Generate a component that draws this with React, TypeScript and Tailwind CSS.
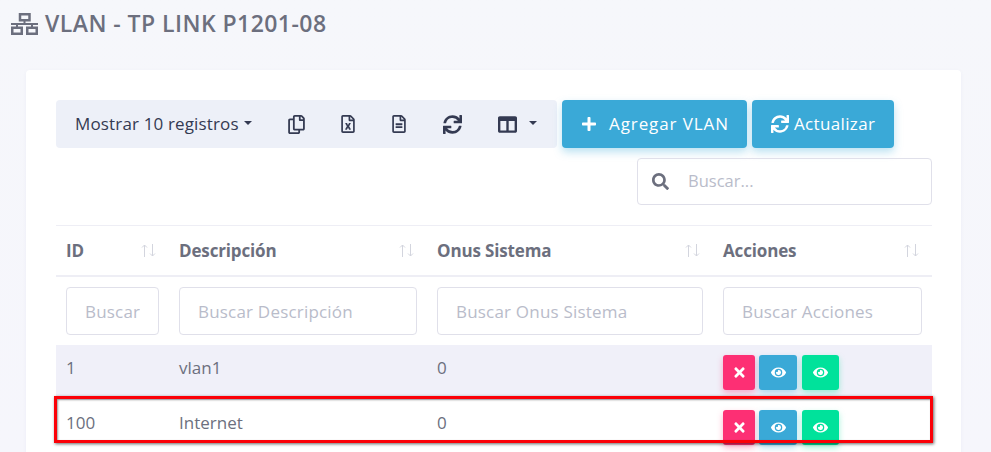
import { FaColumns, FaEye, FaPlus, FaRegCopy, FaRegFileAlt, FaRegFileExcel, FaSearch, FaSync, FaTimes } from "react-icons/fa";

const FONT = "[font-family:'Open_Sans','Noto_Sans',sans-serif]";
const FIELD =
  "h-12 rounded-[4px] border border-[#e0e0ea] bg-white px-[18px] text-[17px] tracking-[0.2px] text-[#495057] outline-none placeholder:text-[#b9bcca]";
const ACTION = "flex h-[35px] items-center justify-center rounded-[3px] text-white";

const COLUMNS = [
  { label: "ID", filter: "Buscar", cell: "w-[113px]", input: "w-[93px]" },
  { label: "Descripción", filter: "Buscar Descripción", cell: "w-[258px]", input: "w-[238px]" },
  { label: "Onus Sistema", filter: "Buscar Onus Sistema", cell: "w-[286px]", input: "w-[266px]" },
  { label: "Acciones", filter: "Buscar Acciones", cell: "w-[219px]", input: "w-[199px]" },
];

const ROWS = [
  { id: "1", name: "vlan1", onus: "0", rowClass: "bg-[#f0f0f9]" },
  { id: "100", name: "Internet", onus: "0", rowClass: "bg-white" },
];

function NetworkIcon() {
  return (
    <svg width="27" height="22" viewBox="0 0 27 22" fill="none" stroke="#6c6f7e" strokeWidth="2.5" className="mr-[7px] shrink-0">
      <rect x="9" y="1.25" width="9.5" height="6" />
      <path d="M0 11h27M13.5 7.5v3.5M6 11v3M21 11v3" strokeWidth="2" />
      <rect x="1.25" y="14.75" width="9.5" height="6" />
      <rect x="16.25" y="14.75" width="9.5" height="6" />
    </svg>
  );
}

function SortArrows() {
  return (
    <span className="mr-[3px] ml-auto flex gap-[1px] text-[#d3d5de]">
      <svg width="7" height="13" viewBox="0 0 7 13" fill="none" stroke="currentColor" strokeWidth="1">
        <path d="M3.5 13V1M1 3.5 3.5 1 6 3.5" />
      </svg>
      <svg width="7" height="13" viewBox="0 0 7 13" fill="none" stroke="currentColor" strokeWidth="1">
        <path d="M3.5 0v12M1 9.5 3.5 12 6 9.5" />
      </svg>
    </span>
  );
}

function Caret({ className }: { className: string }) {
  return <span className={`inline-block border-x-[4.5px] border-t-[4.5px] border-x-transparent border-t-current ${className}`} />;
}

function Actions() {
  return (
    <div className="flex">
      <span className={`${ACTION} w-8 bg-[#fd2f74] shadow-[0_3px_6px_rgba(253,47,116,0.35)]`}>
        <FaTimes size={15} />
      </span>
      <span className={`${ACTION} ml-1 w-[38px] bg-[#3aa9d7] shadow-[0_3px_6px_rgba(58,169,215,0.35)]`}>
        <FaEye size={15} />
      </span>
      <span className={`${ACTION} ml-[5px] w-[37px] bg-[#00e29b] shadow-[0_3px_6px_rgba(0,226,155,0.35)]`}>
        <FaEye size={15} />
      </span>
    </div>
  );
}

export default function App() {
  return (
    <div className={`${FONT} h-[452px] overflow-hidden bg-[#f6f6fc] bg-gradient-to-b from-[#f6f7fb] to-[#f6f6fc]`}>
      <h1 className="flex h-[47px] items-center pl-[11px] text-[23px] font-semibold text-[#6c6f7e]">
        <NetworkIcon />
        <span className="tracking-[0.45px]">VLAN - TP LINK P1201-08</span>
      </h1>

      <div className="mt-[23px] ml-[26px] h-[400px] w-[935px] rounded-[4px] bg-white pt-[30px] pr-[29px] pl-[30px] shadow-[0_1px_4px_rgba(60,60,120,0.04)]">
        <div className="flex gap-[5px]">
          <div className="flex h-12 w-[501px] items-center rounded-[4px] bg-[#edf0f8] text-[#343a52]">
            <span className="ml-[19px] flex w-[212px] items-center text-[17px] tracking-[0.15px]">
              Mostrar 10 registros
              <Caret className="mb-[2px] ml-[5px]" />
            </span>
            <FaRegCopy size={19} />
            <FaRegFileExcel size={18} className="ml-[33px]" />
            <FaRegFileAlt size={18} className="ml-[33px]" />
            <FaSync size={19} className="ml-[35px]" />
            <FaColumns size={19} className="ml-[36px]" />
            <Caret className="mb-[3px] ml-[12px]" />
          </div>
          <button className="flex h-12 w-[185px] items-center rounded-[4px] bg-[#3aa9d7] pl-[19px] text-[17px] tracking-[0.9px] text-white shadow-[0_4px_8px_rgba(58,169,215,0.35)]">
            <FaPlus size={16} />
            <span className="ml-3">Agregar VLAN</span>
          </button>
          <button className="flex h-12 w-[142px] items-center rounded-[4px] bg-[#3aa9d7] pl-[19px] text-[17px] tracking-[0.35px] text-white shadow-[0_4px_8px_rgba(58,169,215,0.35)]">
            <FaSync size={18} />
            <span className="ml-[5px]">Actualizar</span>
          </button>
        </div>

        <div className="mt-[10px] flex justify-end">
          <div className="flex h-[47px] w-[295px] items-center rounded-[4px] border border-[#e0e0ea] pl-[14px]">
            <FaSearch size={17} className="text-[#6c6f7e]" />
            <input className="ml-[19px] w-[230px] text-[16.5px] text-[#495057] outline-none placeholder:text-[#b9bcca]" placeholder="Buscar..." />
          </div>
        </div>

        <div className="relative mt-[20px]">
          <table className="w-[876px] table-fixed border-collapse text-[17px] text-[#6c6f7e]">
            <thead>
              <tr className="h-[50px] border-t border-b-2 border-t-[#eeeef5] border-b-[#eeeef5]">
                {COLUMNS.map((c) => (
                  <th key={c.label} className={`${c.cell} px-[10px] text-left font-bold`}>
                    <div className="flex items-center tracking-[-0.15px]">
                      {c.label}
                      <SortArrows />
                    </div>
                  </th>
                ))}
              </tr>
              <tr className="h-[69px]">
                {COLUMNS.map((c) => (
                  <th key={c.label} className="px-[10px] pt-[1px] font-normal">
                    <input className={`${FIELD} ${c.input} block`} placeholder={c.filter} />
                  </th>
                ))}
              </tr>
            </thead>
            <tbody>
              {ROWS.map((r) => (
                <tr key={r.id} className={`h-[55px] ${r.rowClass}`}>
                  <td className="px-[10px] pt-[11px] align-top leading-6">{r.id}</td>
                  <td className="px-[10px] pt-[11px] align-top leading-6">{r.name}</td>
                  <td className="px-[10px] pt-[11px] align-top leading-6">{r.onus}</td>
                  <td className="px-[10px]">
                    <Actions />
                  </td>
                </tr>
              ))}
            </tbody>
          </table>
          {/* marca roja sobre la fila */}
          <div className="pointer-events-none absolute top-[171px] -left-[2px] h-[47px] w-[879px] border-[3px] border-[#fb0007] shadow-[1px_1px_3px_rgba(0,0,0,0.6),inset_1px_1px_2px_rgba(0,0,0,0.4)]" />
        </div>
      </div>
    </div>
  );
}
